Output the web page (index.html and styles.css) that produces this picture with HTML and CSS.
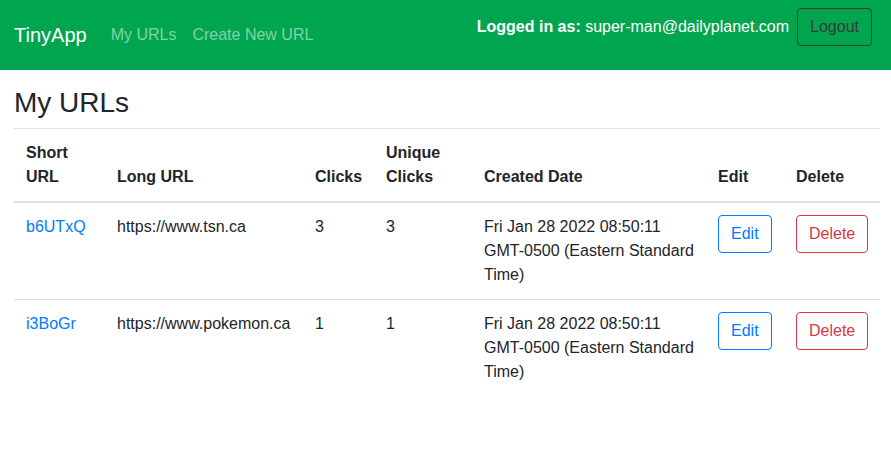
FILE: index.html
```html
<!DOCTYPE html>
<html lang="en">
<head>
<meta charset="utf-8">
<title>TinyApp</title>
<link rel="stylesheet" href="styles.css">
</head>
<body>
<nav class="navbar">
  <a class="brand" href="#">TinyApp</a>
  <div class="nav-links">
    <a class="nav-link" href="#">My URLs</a>
    <a class="nav-link" href="#">Create New URL</a>
  </div>
  <div class="user">
    <span class="user-text"><b>Logged in as:</b> super-man@dailyplanet.com</span>
    <button class="btn btn-dark-outline">Logout</button>
  </div>
</nav>
<main class="main">
  <h3 class="title">My URLs</h3>
  <table class="table">
    <colgroup>
      <col class="c1"><col class="c2"><col class="c3"><col class="c4"><col class="c5"><col class="c6"><col class="c7">
    </colgroup>
    <thead>
      <tr>
        <th>Short URL</th>
        <th>Long URL</th>
        <th>Clicks</th>
        <th>Unique Clicks</th>
        <th>Created Date</th>
        <th>Edit</th>
        <th>Delete</th>
      </tr>
    </thead>
    <tbody>
      <tr>
        <td><a class="link" href="#">b6UTxQ</a></td>
        <td>https://www.tsn.ca</td>
        <td>3</td>
        <td>3</td>
        <td>Fri Jan 28 2022 08:50:11 GMT-0500 (Eastern Standard Time)</td>
        <td><button class="btn btn-primary-outline">Edit</button></td>
        <td><button class="btn btn-danger-outline">Delete</button></td>
      </tr>
      <tr>
        <td><a class="link" href="#">i3BoGr</a></td>
        <td>https://www.pokemon.ca</td>
        <td>1</td>
        <td>1</td>
        <td>Fri Jan 28 2022 08:50:11 GMT-0500 (Eastern Standard Time)</td>
        <td><button class="btn btn-primary-outline">Edit</button></td>
        <td><button class="btn btn-danger-outline">Delete</button></td>
      </tr>
    </tbody>
  </table>
</main>
</body>
</html>
```
FILE: styles.css
```css
* { box-sizing: border-box; }
body {
  margin: 0;
  font-family: "Liberation Sans", Arial, sans-serif;
  font-size: 16px;
  line-height: 1.5;
  color: #212529;
  background: #fff;
}
.navbar {
  display: flex;
  align-items: center;
  height: 70px;
  padding: 0 19px 0 14px;
  background: #00a64f;
}
.brand {
  font-size: 20px;
  line-height: 30px;
  color: #fff;
  text-decoration: none;
  margin-right: 16px;
}
.nav-links { display: flex; }
.nav-link {
  padding: 0 8px;
  color: rgba(255, 255, 255, 0.5);
  text-decoration: none;
}
.user {
  margin-left: auto;
  align-self: flex-start;
  margin-top: 8px;
  display: flex;
  align-items: center;
  gap: 8px;
  color: #fff;
}
.btn {
  font-family: inherit;
  font-size: 16px;
  line-height: 24px;
  padding: 6px 12px;
  border: 1px solid transparent;
  border-radius: 4px;
  background: transparent;
  cursor: pointer;
}
.btn-dark-outline { color: #343a40; border-color: #343a40; }
.btn-primary-outline { color: #007bff; border-color: #007bff; }
.btn-danger-outline { color: #dc3545; border-color: #dc3545; }
.main { padding: 16px 11px 0 14px; }
.title {
  margin: 0 0 8px;
  font-size: 28px;
  font-weight: 500;
  line-height: 1.2;
}
.table {
  width: 866px;
  table-layout: fixed;
  border-collapse: collapse;
}
.c1 { width: 91px; }
.c2 { width: 198px; }
.c3 { width: 71px; }
.c4 { width: 98px; }
.c5 { width: 234px; }
.c6 { width: 78px; }
.c7 { width: 96px; }
.table th, .table td {
  padding: 12px;
  text-align: left;
  border-top: 1px solid #dee2e6;
}
.table th {
  vertical-align: bottom;
  border-bottom: 2px solid #dee2e6;
  font-weight: bold;
}
.table td { vertical-align: top; }
.link { color: #007bff; text-decoration: none; }
```
